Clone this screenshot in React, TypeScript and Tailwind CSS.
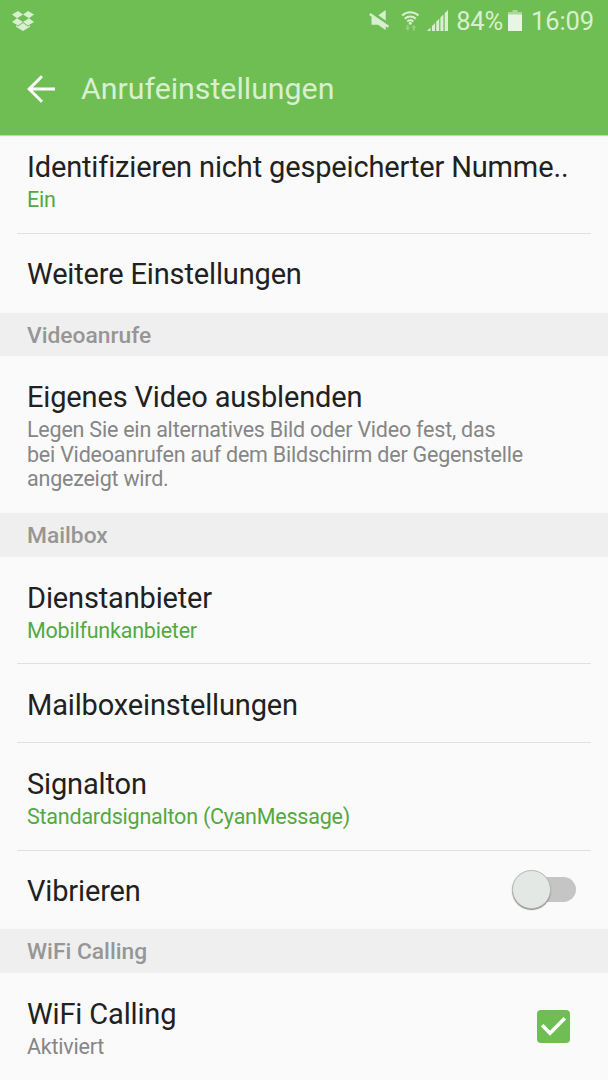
import React from 'react';
import clsx from 'clsx';

interface SettingRowProps {
  title: string;
  summary?: string;
  accent?: boolean;
  divider?: boolean;
  className?: string;
  children?: React.ReactNode;
}

const SettingRow: React.FC<SettingRowProps> = ({
  title,
  summary,
  accent = false,
  divider = false,
  className = 'h-[107px] pt-[24px]',
  children,
}) => (
  <div
    className={clsx(
      'mx-[17px] flex shrink-0 items-start justify-between pl-[10px]',
      divider && 'border-b border-[#e0e0e0]',
      className
    )}
  >
    <div>
      <h2 className="whitespace-nowrap text-[29px] leading-[34px] tracking-[-0.15px] text-[#212121]">
        {title}
      </h2>
      {summary && (
        <p
          className={clsx(
            'mt-[4px] whitespace-pre text-[21.5px] leading-[24.5px] tracking-[-0.22px]',
            accent ? 'text-[#53a93f]' : 'text-[#868686]'
          )}
        >
          {summary}
        </p>
      )}
    </div>
    {children}
  </div>
);

const SectionHeader: React.FC<{ label: string; className?: string }> = ({
  label,
  className = 'h-[44px]',
}) => (
  <div
    className={clsx(
      'flex shrink-0 items-center bg-[#efefef] pl-[27px] pt-[3px] text-[22.8px] font-medium text-[#969696]',
      className
    )}
  >
    {label}
  </div>
);

const DropboxIcon = () => (
  <svg width="22" height="20" viewBox="0 0 22 20" className="fill-[#d9efd1]">
    <path d="M6 0l5 3.4L5 7.2 0 3.6zM16 0l6 3.6-5 3.6-6-3.8zM0 11l5-3.7 6 3.8-5 3.5zM22 11l-5-3.7-6 3.8 5 3.5z" />
    <path d="M11 11.9l5 3.6 2-1.2v1.5L11 20l-7-4.2v-1.5l2 1.2z" />
  </svg>
);

const MuteIcon = () => (
  <svg width="20" height="20" viewBox="0 0 20 20" className="fill-[#d9efd1]">
    <path d="M16.7 0v10.4L9.3 5.3zM2.5 6.6l14.2 8.5v5L9 14.8H2.5z" />
    <path d="M.8 4.1l18.600 12.700" stroke="#d9efd1" strokeWidth="2.4" />
  </svg>
);

const WifiIcon = () => (
  <svg width="19" height="22" viewBox="0 0 20 22" fill="none">
    <g stroke="#d9efd1" strokeWidth="2.2">
      <path d="M1.2 5.2a12.6 12.6 0 0 1 17.2 0" />
      <path d="M4 8.600a8.400 8.400 0 0 1 11.600 0" />
      <path d="M6.600 11.600a4.700 4.700 0 0 1 6.400 0" />
    </g>
    <circle cx="9.800" cy="13.300" r="1.600" fill="#d9efd1" />
    <path
      d="M6 15.200v3H4.300l2.700 3 2.700-3H8v-3zM12.500 21.200v-3h-1.700l2.700-3 2.700 3h-1.700v3z"
      fill="#98d184"
    />
  </svg>
);

const SignalIcon = () => (
  <svg width="21" height="21" viewBox="0 0 21 21" className="fill-[#d9efd1]">
    <path d="M0 21l3.500-3.500V21zM5 21v-5l3-3v8zM9.200 21v-9.200l3-3V21zM13.400 21V7.600l3-3V21zM17.700 21V3.300L21 0v21z" />
  </svg>
);

const BatteryIcon = () => (
  <svg width="14" height="21" viewBox="0 0 14 21">
    <path d="M4.500 0h5v2H14v3H0V2h4.500z" fill="#a9d899" />
    <path d="M0 4.500h14V21H0z" fill="#e8f5e4" />
  </svg>
);

const Toggle = () => (
  <div className="relative mr-[15px] mt-[-4px] h-[40px] w-[65px]">
    <div className="absolute left-[16px] top-[7px] h-[25px] w-[49px] rounded-full bg-[#c5c5c5]" />
    <div className="absolute left-[1px] top-0 size-[39px] rounded-full border border-[#b7bab6] bg-[#e4e8e4] shadow-[0_1px_1px_#888888]" />
  </div>
);

const Checkbox = () => (
  <div className="mr-[21px] mt-[13px] size-[33px] rounded-[4px] bg-[#6ebe53]">
    <svg width="33" height="33" viewBox="0 0 33 33" fill="none">
      <path d="M5.200 15.200l7.800 8L27.800 8.200" stroke="white" strokeWidth="3.600" />
    </svg>
  </div>
);

export default function App() {
  return (
    <div className="flex h-[1080px] w-[608px] flex-col overflow-hidden bg-[#fafafa] font-['Roboto',sans-serif]">
      <header className="z-10 h-[135px] shrink-0 bg-[#6ebe53] shadow-[0_1px_1px_#cccccc]">
        <div className="flex h-[43px] items-center pl-[12px] pr-[14px] text-[25.5px] leading-none text-[#d9efd1]">
          <div className="mt-[-2px]">
            <DropboxIcon />
          </div>
          <div className="ml-auto flex items-center">
            <div className="mr-[12px] mt-[-3px]">
              <MuteIcon />
            </div>
            <div className="mr-[7px] mt-[-2px]">
              <WifiIcon />
            </div>
            <div className="mt-[-3px]">
              <SignalIcon />
            </div>
            <span className="ml-[8px] tracking-[-0.2px]">84%</span>
            <div className="ml-[5px] mt-[-2px]">
              <BatteryIcon />
            </div>
            <span className="ml-[9px] tracking-[-0.1px]">16:09</span>
          </div>
        </div>
        <div className="flex h-[92px] items-center pl-[27px]">
          <svg width="28" height="28" viewBox="0 0 28 28" fill="none">
            <path d="M15 1.200L2.200 14 15 26.800M2.200 14H28" stroke="white" strokeWidth="3" />
          </svg>
          <h1 className="ml-[26px] text-[30.3px] leading-[34px] text-[#d9efd1]">Anrufeinstellungen</h1>
        </div>
      </header>

      <main className="flex flex-col">
        <SettingRow
          title="Identifizieren nicht gespeicherter Numme.."
          summary="Ein"
          accent
          divider
          className="h-[99px] pt-[15px]"
        />
        <SettingRow title="Weitere Einstellungen" className="h-[79px] pt-[23px]" />

        <SectionHeader label="Videoanrufe" className="h-[43px]" />
        <SettingRow
          title="Eigenes Video ausblenden"
          summary={
            'Legen Sie ein alternatives Bild oder Video fest, das\nbei Videoanrufen auf dem Bildschirm der Gegenstelle\nangezeigt wird.'
          }
          className="h-[157px] pt-[24px]"
        />

        <SectionHeader label="Mailbox" />
        <SettingRow title="Dienstanbieter" summary="Mobilfunkanbieter" accent divider />
        <SettingRow title="Mailboxeinstellungen" divider className="h-[79px] pt-[24px]" />
        <SettingRow
          title="Signalton"
          summary="Standardsignalton (CyanMessage)"
          accent
          divider
          className="h-[108px] pt-[24px]"
        />
        <SettingRow title="Vibrieren" className="h-[78px] pt-[23px]">
          <Toggle />
        </SettingRow>

        <SectionHeader label="WiFi Calling" />
        <SettingRow title="WiFi Calling" summary="Aktiviert">
          <Checkbox />
        </SettingRow>
      </main>
    </div>
  );
}
